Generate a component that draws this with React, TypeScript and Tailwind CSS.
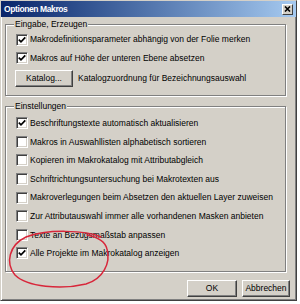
import type { ReactNode } from 'react'

const font = { fontFamily: '"Liberation Sans", Arial, sans-serif' }

const CheckBox = ({ checked = false }: { checked?: boolean }) => (
  <span className="relative flex h-[12px] w-[12px] shrink-0 items-center justify-center border border-t-[#808080] border-l-[#808080] border-b-white border-r-white bg-white shadow-[inset_1px_1px_0_#404040,inset_-1px_-1px_0_#d4d0c8]">
    {checked && (
      <svg width="8" height="8" viewBox="0 0 8 8" className="block">
        <path d="M0.8 3.6 L3 5.8 L7.3 1.4" fill="none" stroke="#000" strokeWidth="1.7" />
      </svg>
    )}
  </span>
)

const Row = ({ label, checked, h = 'h-[18.6px]' }: { label: string; checked?: boolean; h?: string }) => (
  <div className={`flex items-center gap-[2px] pl-[10px] ${h}`}>
    <CheckBox checked={checked} />
    <span className="whitespace-nowrap leading-none">{label}</span>
  </div>
)

const WinButton = ({ children, w }: { children: ReactNode; w: string }) => (
  <button
    className={`flex h-[17px] ${w} items-center justify-center border border-t-white border-l-white border-r-[#404040] border-b-[#404040] bg-[#d4d0c8] shadow-[inset_-1px_-1px_0_#808080] leading-none text-black`}
  >
    {children}
  </button>
)

// etched group box, caption sits on the top border
const Group = ({ title, className = '', children }: { title: string; className?: string; children: ReactNode }) => (
  <div className={`ml-[4px] w-[281px] border border-[#808080] shadow-[inset_1px_1px_0_#fff,1px_1px_0_#fff] ${className}`}>
    <span className="-mt-[7px] ml-[8px] block h-[12px] w-fit bg-[#d4d0c8] px-[1px] leading-[12px]">{title}</span>
    {children}
  </div>
)

const settings = [
  { label: 'Beschriftungstexte automatisch aktualisieren', checked: true },
  { label: 'Makros in Auswahllisten alphabetisch sortieren' },
  { label: 'Kopieren im Makrokatalog mit Attributabgleich' },
  { label: 'Schriftrichtungsuntersuchung bei Makrotexten aus' },
  { label: 'Makroverlegungen beim Absetzen den aktuellen Layer zuweisen' },
  { label: 'Zur Attributauswahl immer alle vorhandenen Masken anbieten' },
  { label: 'Texte an Bezugsmaßstab anpassen' },
  { label: 'Alle Projekte im Makrokatalog anzeigen', checked: true },
]

export default function App() {
  return (
    <div className="h-[304px] w-[300px] overflow-hidden bg-white text-[8.5px] text-black" style={font}>
      <div className="relative flex h-[301px] w-[297px] flex-col border border-t-[#d4d0c8] border-l-[#d4d0c8] border-r-[#404040] border-b-[#404040] bg-[#d4d0c8] shadow-[inset_1px_1px_0_#fff,inset_-1px_-1px_0_#808080]">
        <div className="flex h-[16px] shrink-0 items-center justify-between bg-gradient-to-r from-[#0a246a] to-[#a6caf0] pl-[3px] pr-[3px]">
          <span className="font-bold leading-none tracking-[-0.4px] text-white">Optionen Makros</span>
          <span className="flex h-[11px] w-[11px] items-center justify-center border border-t-white border-l-white border-r-[#404040] border-b-[#404040] bg-[#d4d0c8]">
            <svg width="7" height="6" viewBox="0 0 7 6">
              <path d="M1 0.5 L6 5.5 M6 0.5 L1 5.5" stroke="#000" strokeWidth="1.6" />
            </svg>
          </span>
        </div>

        <Group title="Eingabe, Erzeugen" className="mt-[7px] pb-[8px]">
          <Row label="Makrodefinitionsparameter abhängig von der Folie merken" checked h="h-[19px]" />
          <Row label="Makros auf Höhe der unteren Ebene absetzen" checked h="h-[18px]" />
          <div className="mt-[3px] flex items-center gap-[5px] pl-[9px]">
            <WinButton w="w-[58px]">Katalog...</WinButton>
            <span className="whitespace-nowrap leading-none">Katalogzuordnung für Bezeichnungsauswahl</span>
          </div>
        </Group>

        <Group title="Einstellungen" className="mt-[10px] pb-[8px]">
          <div className="pt-[2px]">
            {settings.map((s) => (
              <Row key={s.label} label={s.label} checked={s.checked} />
            ))}
          </div>
        </Group>

        <div className="mt-[8px] flex justify-end gap-[5px] pr-[6px]">
          <WinButton w="w-[50px]">OK</WinButton>
          <WinButton w="w-[48px]">Abbrechen</WinButton>
        </div>

        <svg className="pointer-events-none absolute left-0 top-0" width="297" height="301" viewBox="0 0 297 301">
          <path
            d="M100 236 C85 229, 45 228, 25 236 C8 244, 4 262, 14 274 C26 286, 60 289, 85 283 C102 278, 110 262, 106 248 C104 240, 96 236, 86 234"
            fill="none"
            stroke="#d8263a"
            strokeWidth="1.5"
            strokeLinecap="round"
          />
        </svg>
      </div>
    </div>
  )
}
